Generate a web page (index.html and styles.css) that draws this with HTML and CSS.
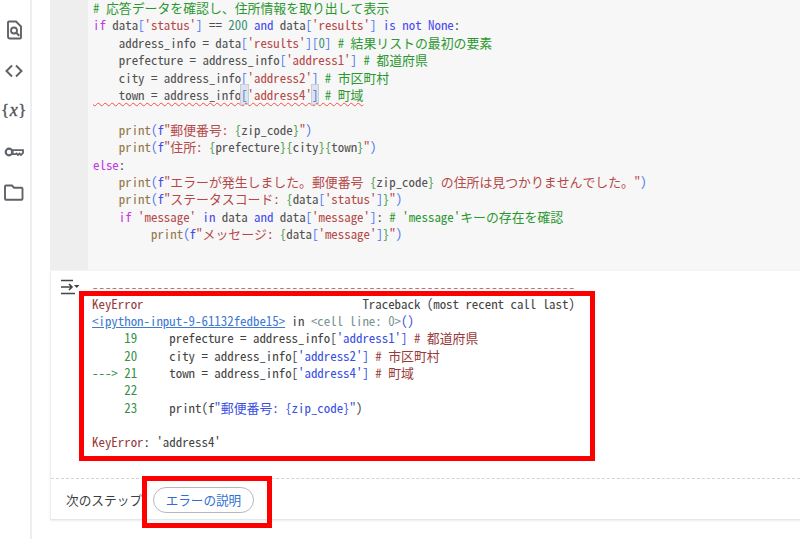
FILE: index.html
```html
<!DOCTYPE html>
<html lang="ja">
<head>
<meta charset="utf-8">
<title>Colab</title>
<link rel="stylesheet" href="styles.css">
</head>
<body>
<div class="page">
  <aside class="rail">
    <svg class="ico" viewBox="0 0 20 20"><path d="M5 1.500h7l5 5v11a1 1 0 0 1-1 1H6a2 2 0 0 1-2-2V2.500a1 1 0 0 1 1-1z" fill="none" stroke="#5f6368" stroke-width="1.900"/><circle cx="10" cy="10.500" r="3" fill="none" stroke="#5f6368" stroke-width="1.800"/><path d="M12.300 12.800l3 3" stroke="#5f6368" stroke-width="2"/></svg>
    <svg class="ico" viewBox="0 0 20 20"><path d="M8 4.500L2.500 10 8 15.500M12 4.500l5.500 5.500-5.500 5.500" fill="none" stroke="#5f6368" stroke-width="2"/></svg>
    <div class="var">{<i>x</i>}</div>
    <svg class="ico" viewBox="0 0 20 20"><circle cx="5" cy="10" r="3.300" fill="none" stroke="#5f6368" stroke-width="2.200"/><path d="M8.500 8.200h10.500v2.600l-2 2.200-1.500-1.500-1.500 1.500-1.500-1.500-1 .7H8.500z" fill="none" stroke="#5f6368" stroke-width="1.800"/></svg>
    <svg class="ico" viewBox="0 0 20 20"><path d="M2 3.500h6l2 2.200h7.500a1 1 0 0 1 1 1v10a1 1 0 0 1-1 1H2a1 1 0 0 1-1-1V4.500a1 1 0 0 1 1-1z" fill="none" stroke="#5f6368" stroke-width="1.900"/></svg>
  </aside>
  <main class="cell">
    <div class="editor">
      <div class="gutter"></div>
<pre class="code"><span class="c"># 応答データを確認し、住所情報を取り出して表示</span>
<span class="k">if</span> data<span class="b">[</span><span class="s">'status'</span><span class="b">]</span> == <span class="n">200</span> <span class="o">and</span> data<span class="b">[</span><span class="s">'results'</span><span class="b">]</span> <span class="o">is</span> <span class="o">not</span> <span class="o">None</span>:
    address_info = data<span class="b">[</span><span class="s">'results'</span><span class="b">][</span><span class="n">0</span><span class="b">]</span> <span class="c"># 結果リストの最初の要素</span>
    prefecture = address_info<span class="b">[</span><span class="s">'address1'</span><span class="b">]</span> <span class="c"># 都道府県</span>
    city = address_info<span class="b">[</span><span class="s">'address2'</span><span class="b">]</span> <span class="c"># 市区町村</span>
<span class="wavy">    town = address_info<span class="b hl">[</span><span class="s">'address4'</span><span class="b hl">]</span> <span class="c"># 町域</span></span>

    <span class="f">print</span><span class="b">(</span><span class="o">f</span><span class="s">"郵便番号: </span><span class="g">{</span>zip_code<span class="g">}</span><span class="s">"</span><span class="b">)</span>
    <span class="f">print</span><span class="b">(</span><span class="o">f</span><span class="s">"住所: </span><span class="g">{</span>prefecture<span class="g">}{</span>city<span class="g">}{</span>town<span class="g">}</span><span class="s">"</span><span class="b">)</span>
<span class="k">else</span>:
    <span class="f">print</span><span class="b">(</span><span class="o">f</span><span class="s">"エラーが発生しました。郵便番号 </span><span class="g">{</span>zip_code<span class="g">}</span><span class="s"> の住所は見つかりませんでした。"</span><span class="b">)</span>
    <span class="f">print</span><span class="b">(</span><span class="o">f</span><span class="s">"ステータスコード: </span><span class="g">{</span>data<span class="b">[</span><span class="s">'status'</span><span class="b">]</span><span class="g">}</span><span class="s">"</span><span class="b">)</span>
    <span class="k">if</span> <span class="s">'message'</span> <span class="o">in</span> data <span class="o">and</span> data<span class="b">[</span><span class="s">'message'</span><span class="b">]</span>: <span class="c"># 'message'キーの存在を確認</span>
         <span class="f">print</span><span class="b">(</span><span class="o">f</span><span class="s">"メッセージ: </span><span class="g">{</span>data<span class="b">[</span><span class="s">'message'</span><span class="b">]</span><span class="g">}</span><span class="s">"</span><span class="b">)</span></pre>
    </div>
    <section class="output">
      <div class="out-main">
        <svg class="out-ico" viewBox="0 0 20 16"><path d="M1 1.500h12M1 14.500h14M1 8h11M9 5l3 3-3 3" fill="none" stroke="#444" stroke-width="1.600"/><path d="M14 6h5.500l-2.750 3z" fill="#444"/></svg>
<pre class="trace"><span class="dash">---------------------------------------------------------------------------</span>
<span class="re">KeyError</span>                                  Traceback (most recent call last)
<a class="lnk">&lt;ipython-input-9-61132fedbe15&gt;</a> in <span class="gy">&lt;cell line: 0&gt;</span><span class="bl">()</span>
<span class="gn">     19</span>     prefecture = address_info[<span class="bl">'address1'</span><span class="bl">]</span> <span class="re"># 都道府県</span>
<span class="gn">     20</span>     city = address_info[<span class="bl">'address2'</span><span class="bl">]</span> <span class="re"># 市区町村</span>
<span class="gn">---&gt; 21</span>     town = address_info[<span class="bl">'address4'</span><span class="bl">]</span> <span class="re"># 町域</span>
<span class="gn">     22</span>
<span class="gn">     23</span>     print(f<span class="bl">"郵便番号: {zip_code}"</span>)

<span class="re">KeyError</span>: 'address4'</pre>
        <div class="mark mark-trace"></div>
      </div>
      <div class="steps">
        <span class="steps-label">次のステップ</span>
        <span class="pill">エラーの説明</span>
        <div class="mark mark-pill"></div>
      </div>
    </section>
  </main>
</div>
</body>
</html>
```
FILE: styles.css
```css
* { box-sizing: border-box; }
html, body { margin: 0; height: 100%; overflow: hidden; background: #fff; }
.page { display: flex; height: 539px; overflow: hidden; }
.rail {
  width: 32px;
  flex: none;
  border-right: 2px solid #eeeeee;
  padding-top: 20px;
  display: flex;
  flex-direction: column;
  align-items: center;
  gap: 20.5px;
  padding-right: 3px;
}
.ico { width: 20px; height: 20px; display: block; flex: none; }
.var {
  height: 20px;
  font: 17px/18px "Liberation Serif", serif;
  color: #4f5358;
  -webkit-text-stroke: .35px #4f5358;
  white-space: nowrap;
  letter-spacing: -.5px;
}
.var i { font-size: 18px; padding: 0 1px; }
.cell { flex: 1; min-width: 0; padding-left: 18px; }
.editor { display: flex; height: 270px; background: #f7f7f7; overflow: hidden; }
.gutter { width: 38px; flex: none; background: #eeeeee; }
.code, .trace {
  margin: 0;
  font-family: "Noto Sans Mono CJK JP", "DejaVu Sans Mono", "Noto Sans CJK JP", monospace;
  font-size: 12.88px;
  white-space: pre;
  opacity: .92;
}
.code { margin-top: -1px; padding-left: 5px; line-height: 17.4px; color: #444; }
.c { color: #15911c; }
.k { color: #b92de0; }
.o { color: #3a3af0; }
.s { color: #b03a3a; }
.n { color: #2c8a68; }
.b { color: #3b6ff0; }
.g { color: #319331; }
.f { color: #8a6c3a; }
.hl { background: #dde3ea; outline: 1px solid #c4ccd4; }
.wavy { text-decoration: underline wavy #f04438 1px; text-underline-offset: 2px; }
.output {
  border-left: 1px solid #eeeeee;
  border-bottom: 1px solid #e6e6e6;
  border-top: 1px solid #f4f4f4;
  box-shadow: 0 1px 2px rgba(0,0,0,.08);
  height: 250px;
}
.out-main {
  position: relative;
  display: flex;
  height: 208px;
  padding: 6.5px 0 0 9px;
  border-bottom: 1px dashed #d4d4d4;
}
.out-ico { width: 20px; height: 16px; flex: none; margin-top: 1px; margin-right: 12px; }
.trace { line-height: 17.33px; color: #333; }
.dash { color: #b66; }
.re { color: #8e2a2a; }
.gy { color: #6f8a8a; }
.bl { color: #2a3fe0; }
.gn { color: #1f8a3a; }
.lnk { color: #2f6fd0; text-decoration: underline; }
.steps {
  position: relative;
  display: flex;
  align-items: center;
  height: 41px;
  padding-left: 15px;
  gap: 11px;
  font-family: "Noto Sans CJK JP", sans-serif;
}
.steps-label { font-size: 12.7px; color: #3c4043; }
.pill {
  display: block;
  height: 26px;
  line-height: 24px;
  padding: 0 11.5px;
  border: 1px solid #b5b8bc;
  border-radius: 13px;
  font-size: 12.6px;
  color: #2f6fd0;
}
.mark { position: absolute; border: 5px solid #ff0000; pointer-events: none; }
.mark-trace { left: 28px; top: 20px; width: 516px; height: 170px; }
.mark-pill { left: 91px; top: -3px; width: 130px; height: 52px; }
```
